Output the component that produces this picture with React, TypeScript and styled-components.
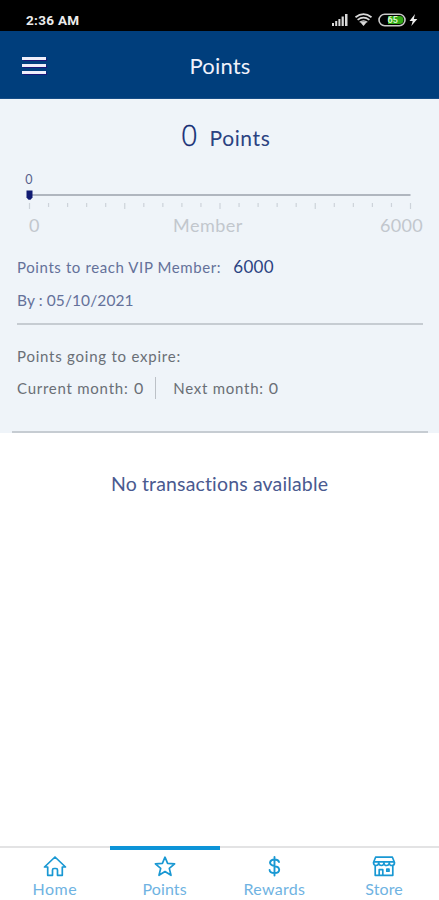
import React from "react";
import styled, { createGlobalStyle } from "styled-components";

const GlobalStyle = createGlobalStyle`
  * { box-sizing: border-box; }
  html, body { margin: 0; padding: 0; background: #fff; }
  body { font-family: Lato, "Liberation Sans", sans-serif; overflow: hidden; }
`;

const Screen = styled.div`
  width: 439px;
  height: 900px;
  display: flex;
  flex-direction: column;
  background: #fff;
`;

const StatusBar = styled.div`
  height: 31px;
  flex: none;
  display: flex;
  align-items: center;
  justify-content: space-between;
  padding: 9px 20px 0 26px;
  background: #000;
  color: #ececec;
`;

const Clock = styled.span`
  font: 700 13.5px/20px Roboto, sans-serif;
  letter-spacing: 0.3px;
`;

const Header = styled.header`
  height: 67.5px;
  flex: none;
  display: grid;
  grid-template-columns: 80px 1fr 80px;
  align-items: center;
  padding-top: 3px;
  background: #003e7c;
  border-bottom: 1px solid #164d86;
`;

const MenuButton = styled.button`
  width: 24px;
  height: 17px;
  margin: 0 0 0 22px;
  padding: 0;
  border: 0;
  background: none;
  display: flex;
  flex-direction: column;
  justify-content: space-between;
`;

const MenuBar = styled.span`
  height: 3px;
  background: #efeefa;
  box-shadow: 0 0 1px 0.5px #1c1678;
`;

const Title = styled.h1`
  margin: 0 0 0 1px;
  text-align: center;
  font-weight: 400;
  font-size: 22px;
  line-height: 28px;
  letter-spacing: 0.15px;
  color: #f0f1fb;
`;

const Summary = styled.section`
  height: 334px;
  flex: none;
  display: flex;
  flex-direction: column;
  padding: 0 16px 0 17px;
  background: #eff4f9;
`;

const Text = styled.span<{ $size: number; $color: string; $track?: number }>`
  font-size: ${(p) => p.$size}px;
  color: ${(p) => p.$color};
  letter-spacing: ${(p) => p.$track ?? 0}px;
  line-height: 1.2;
  white-space: nowrap;
`;

const Balance = styled.div`
  height: 74px;
  padding: 17px 0 0 164px;
  display: flex;
  align-items: baseline;
  gap: 12px;
`;

const BalanceValue = styled.span`
  font: 300 29px/37px "Open Sans", sans-serif;
  color: #122b73;
  -webkit-text-stroke: 0.3px #122b73;
`;

const Scale = styled.div`
  height: 39px;
  margin-left: 5px;
`;

const ScaleLabels = styled.div`
  height: 35px;
  display: grid;
  grid-template-columns: 144px 1fr auto;
  align-items: start;
  padding: 4px 0 0 12px;
`;

const Row = styled.div<{ $height: number }>`
  height: ${(p) => p.$height}px;
  flex: none;
  display: flex;
  align-items: center;
`;

const Rule = styled.div<{ $bleed?: number }>`
  height: 2px;
  flex: none;
  margin: 0 -${(p) => p.$bleed ?? 0}px;
  background: #c6ccd2;
`;

const Separator = styled.div`
  width: 1px;
  height: 22px;
  margin: 0 17px 0 12px;
  background: #bcc1c7;
`;

const Gap = styled.div<{ $size: number }>`
  width: ${(p) => p.$size}px;
  flex: none;
`;

const Transactions = styled.main`
  flex: 1;
  padding-top: 39px;
  text-align: center;
`;

const TabBar = styled.nav`
  height: 54px;
  flex: none;
  display: grid;
  grid-template-columns: repeat(4, 1fr);
`;

const Tab = styled.a<{ $active?: boolean }>`
  display: flex;
  flex-direction: column;
  align-items: center;
  border-top: ${(p) => (p.$active ? "4px solid #0d94d8" : "2px solid #e3e3e4")};
  padding-top: ${(p) => (p.$active ? 5 : 7)}px;
  color: #1998d3;

  svg { display: block; flex: none; }
`;

const TabLabel = styled.span<{ $track: number }>`
  margin-top: 2px;
  font-size: 16px;
  line-height: 20px;
  letter-spacing: ${(p) => p.$track}px;
  color: #6fb3e2;
`;

const navy = "#2b4281";
const slate = "#64719a";
const gray = "#6a6f76";
const pale = "#c2c7cd";

const StatusIcons = () => (
  <svg width="88" height="16" viewBox="0 0 88 16">
    <g fill="#d9d9d9">
      <rect x="1" y="11" width="2" height="3" />
      <rect x="4.2" y="9" width="2" height="5" />
      <rect x="7.4" y="7" width="2" height="7" />
      <rect x="10.6" y="4.5" width="2.2" height="9.5" />
      <rect x="14" y="2" width="2.5" height="12" />
      <path d="M32.5 14l-3-3.4q3-2.3 6 0z" />
    </g>
    <g fill="none" stroke="#d9d9d9" strokeWidth="1.8">
      <path d="M24.5 5.2q8-6 16 0" />
      <path d="M26.6 7.9q5.9-4.5 11.8 0" />
      <path d="M28.7 10.3q3.8-2.8 7.6 0" strokeWidth="1.4" />
    </g>
    <rect x="48" y="2.3" width="26" height="11.4" rx="5.7" fill="#000" stroke="#c9c9c9" strokeWidth="1.6" />
    <path d="M57 4h11.5a4 4 0 0 1 0 8H57z" fill="#31a815" />
    <text x="56.5" y="11.3" fontFamily="Roboto, sans-serif" fontSize="9" fontWeight="700" fill="#d5f5ca">65</text>
    <path d="M84 2l-5.5 7h3.2L80.3 14l6-7h-3.5z" fill="#eee" />
  </svg>
);

const ticks = Array.from({ length: 21 }, (_, i) => i);

const ProgressScale = () => (
  <svg width="400" height="39" viewBox="0 0 400 39" display="block">
    <path d="M7 23H388.5" stroke="#b0b6bf" strokeWidth="2" />
    {ticks.map((i) => (
      <path key={i} d={`M${7.5 + i * 19.05} 31v${i % 5 === 0 ? 6 : 4}`} stroke="#cdd3da" strokeWidth="1.2" />
    ))}
    <path d="M4.5 18.5h6v7l-2 2.2h-2l-2-2.2z" fill="#111b73" />
    <text x="3.3" y="12" fontFamily="Lato, sans-serif" fontSize="12.5" fill="#59618c">0</text>
  </svg>
);

const iconProps = {
  width: 24,
  height: 22,
  viewBox: "0 0 24 22",
  fill: "none",
  stroke: "currentColor",
  strokeWidth: 1.7,
  strokeLinejoin: "round" as const,
  strokeLinecap: "round" as const,
};

const HomeIcon = () => (
  <svg {...iconProps}>
    <path d="M1.5 12L12 2l10.5 10h-3.2v8.3h-4.8v-5.2q0-1.6-1.5-1.6h-2q-1.5 0-1.5 1.6v5.2H4.7V12z" />
  </svg>
);

const StarIcon = () => (
  <svg {...iconProps}>
    <path d="M12 2.2l2.6 6.2 7 .5-5.3 4.5 1.7 6.9-6-3.8-6 3.8 1.7-6.9-5.3-4.5 7-.5z" />
  </svg>
);

const DollarIcon = () => (
  <svg {...iconProps} strokeWidth={1.9}>
    <path d="M12.5 2v18.5M17 7q-.7-2.5-4.5-2.5T8 7.5q0 2.7 4.5 3.5t4.7 3.7q0 3.3-4.7 3.3T7.6 15" />
  </svg>
);

const StoreIcon = () => (
  <svg {...iconProps}>
    <path d="M3.6 2.2h16.8l2.1 5.3q0 3-2.5 3t-2.7-2.3q-.3 2.3-2.7 2.3T12 8.2q-.3 2.3-2.6 2.3T6.7 8.2Q6.4 10.5 4 10.5T1.5 7.5zM1.8 6.9h20.4M3.2 11v9.3h17.6V11M7.2 20v-5.3h3.6V20" />
    <rect x="14.8" y="14.2" width="2.2" height="2" />
  </svg>
);

export default function App() {
  return (
    <Screen>
      <GlobalStyle />
      <StatusBar>
        <Clock>2:36 AM</Clock>
        <StatusIcons />
      </StatusBar>
      <Header>
        <MenuButton aria-label="Menu">
          <MenuBar />
          <MenuBar />
          <MenuBar />
        </MenuButton>
        <Title>Points</Title>
      </Header>
      <Summary>
        <Balance>
          <BalanceValue>0</BalanceValue>
          <Text $size={21} $color={navy} $track={0.6}>Points</Text>
        </Balance>
        <Scale>
          <ProgressScale />
        </Scale>
        <ScaleLabels>
          <Text $size={18} $color={pale}>0</Text>
          <Text $size={18} $color={pale} $track={0.5}>Member</Text>
          <Text $size={18} $color={pale} $track={0.3}>6000</Text>
        </ScaleLabels>
        <Row $height={43}>
          <Text $size={15} $color={slate} $track={0.6}>Points to reach VIP Member:</Text>
          <Gap $size={12} />
          <Text $size={17} $color={navy} $track={0.3}>6000</Text>
        </Row>
        <Row $height={24}>
          <Text $size={15.5} $color={slate} $track={0.1}>By : 05/10/2021</Text>
        </Row>
        <Row $height={10} />
        <Rule />
        <Row $height={62}>
          <Text $size={15} $color={gray} $track={0.77}>Points going to expire:</Text>
        </Row>
        <Row $height={2}>
          <Text $size={15} $color={gray} $track={0.75}>Current month:</Text>
          <Gap $size={5.5} />
          <Text $size={16} $color={gray}>0</Text>
          <Separator />
          <Text $size={15} $color={gray} $track={0.75}>Next month:</Text>
          <Gap $size={5} />
          <Text $size={16} $color={gray}>0</Text>
        </Row>
        <Row $height={42} />
        <Rule $bleed={5} />
      </Summary>
      <Transactions>
        <Text $size={19.5} $color="#4a5a90" $track={0.15}>No transactions available</Text>
      </Transactions>
      <TabBar>
        <Tab><HomeIcon /><TabLabel $track={0.5}>Home</TabLabel></Tab>
        <Tab $active><StarIcon /><TabLabel $track={0.1}>Points</TabLabel></Tab>
        <Tab><DollarIcon /><TabLabel $track={0.3}>Rewards</TabLabel></Tab>
        <Tab><StoreIcon /><TabLabel $track={0.1}>Store</TabLabel></Tab>
      </TabBar>
    </Screen>
  );
}
